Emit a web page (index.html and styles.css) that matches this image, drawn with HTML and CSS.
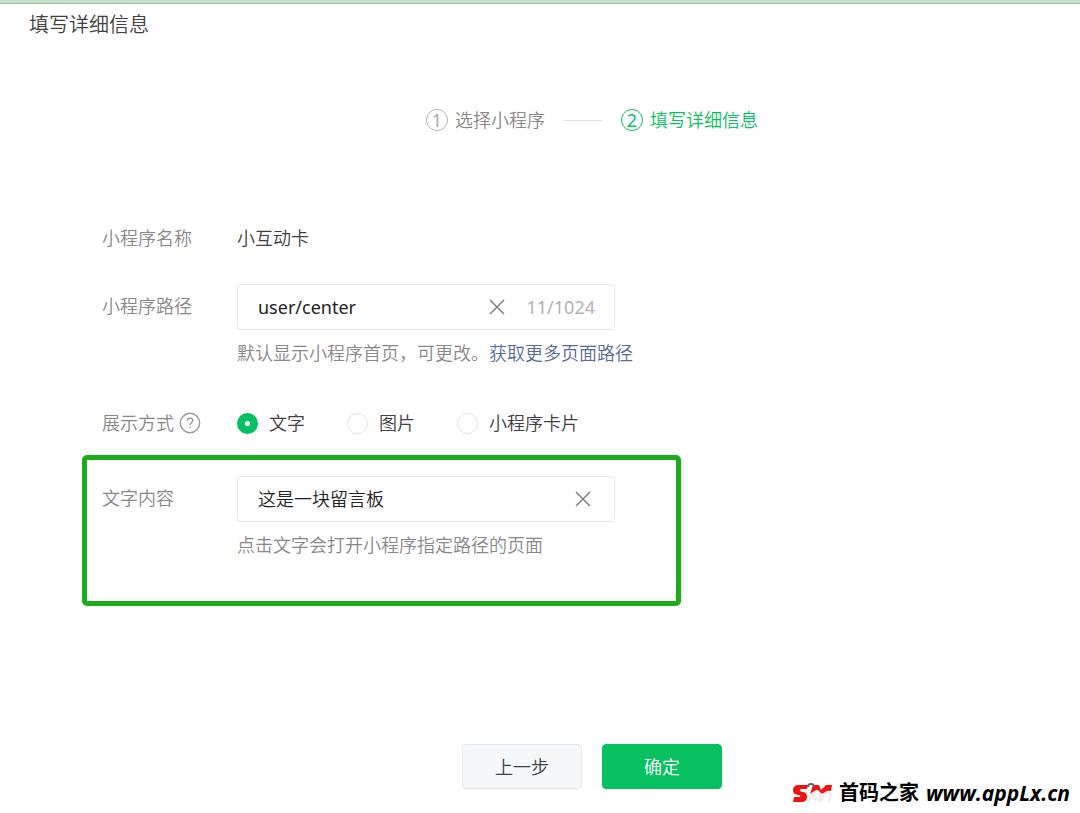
FILE: index.html
```html
<!DOCTYPE html>
<html lang="zh-CN">
<head>
    <meta charset="UTF-8">
    <meta name="viewport" content="width=device-width, initial-scale=1.0">
    <title>填写详细信息</title>
    <link rel="stylesheet" href="styles.css">
</head>
<body>
    <header class="page-header">
        <h1>填写详细信息</h1>
    </header>
    <main>
        <ol class="steps">
            <li class="step"><span class="step-number">1</span>选择小程序</li>
            <li class="step-line"></li>
            <li class="step active"><span class="step-number">2</span>填写详细信息</li>
        </ol>
        <form class="detail-form">
            <div class="form-row">
                <span class="form-label">小程序名称</span>
                <div class="form-field">小互动卡</div>
            </div>
            <div class="form-row path-row">
                <label class="form-label input-label" for="path">小程序路径</label>
                <div class="form-field">
                    <div class="input-box">
                        <input class="path-input" type="text" id="path" name="path" value="user/center">
                        <button type="button" class="clear" aria-label="清空">
                            <svg width="16" height="16" viewBox="0 0 16 16"><path d="M1 1l14 14M15 1L1 15"/></svg>
                        </button>
                        <span class="counter">11/1024</span>
                    </div>
                    <p class="hint">默认显示小程序首页，可更改。<a href="#">获取更多页面路径</a></p>
                </div>
            </div>
            <div class="form-row display-row" role="radiogroup" aria-labelledby="display-label">
                <div class="form-label help-label">
                    <span id="display-label">展示方式</span>
                    <svg class="help" width="22" height="22" viewBox="0 0 22 22">
                        <circle cx="11" cy="11" r="9.7"/>
                        <path d="M8.3 8.8c0-1.7 1.1-2.7 2.8-2.7s2.7 1 2.7 2.4c0 2-2.7 2.2-2.7 4.5"/>
                        <path d="M11.1 14.6v1.6"/>
                    </svg>
                </div>
                <div class="form-field radios">
                    <label><input type="radio" name="display" value="text" checked>文字</label>
                    <label><input type="radio" name="display" value="image">图片</label>
                    <label><input type="radio" name="display" value="card">小程序卡片</label>
                </div>
            </div>
            <div class="form-row highlight">
                <label class="form-label input-label" for="content">文字内容</label>
                <div class="form-field">
                    <div class="input-box">
                        <input type="text" id="content" name="content" value="这是一块留言板">
                        <button type="button" class="clear clear-last" aria-label="清空">
                            <svg width="16" height="16" viewBox="0 0 16 16"><path d="M1 1l14 14M15 1L1 15"/></svg>
                        </button>
                    </div>
                    <p class="hint">点击文字会打开小程序指定路径的页面</p>
                </div>
            </div>
            <div class="actions">
                <button type="button" class="btn">上一步</button>
                <button type="submit" class="btn btn-primary">确定</button>
            </div>
        </form>
    </main>
    <div class="watermark">
        <svg width="40" height="26" viewBox="0 0 40 26">
            <path class="logo-red" d="M16 5H7C3 5 1 7 1 10c0 4 2 4 5 5 2 0 3 1 2 2H2l-1 5h8c4 0 6-2 6-5 0-4-2-5-5-5-3-1-3-3 0-3h5z"/>
            <path class="logo-red" d="M18 14l3-9h6l2 5 5-5h6l-1 6c-4-1-6 1-9 3l-4-4c-3 0-5 2-8 4z"/>
            <path class="logo-shadow" d="M16 22l4-9 3 7 6-7-2 9M29 22l4-9h6l-2 9"/>
            <path class="logo-ring" d="M16 7a3 3 0 1 1 6 0"/>
        </svg>
        <span class="watermark-name">首码之家</span>
        <span class="watermark-url">www.appLx.cn</span>
    </div>
</body>
</html>
```

FILE: styles.css
```css
* {
    box-sizing: border-box;
}
body {
    margin: 0;
    position: relative;
    min-height: 100vh;
    background: #fff;
    color: #404040;
    font-family: "Noto Sans", "Noto Sans CJK SC", sans-serif;
    font-size: 18px;
    font-weight: 350;
    line-height: 24px;
}
input, button {
    font: inherit;
    color: inherit;
}
.page-header {
    padding: 8px 29px 0;
    border-top: 3px solid #c5e3c6;
    box-shadow: inset 0 1px 0 #a3b9a3;
}
h1 {
    margin: 0;
    font-size: 20px;
    font-weight: inherit;
    line-height: 28px;
}
.steps {
    display: flex;
    justify-content: center;
    align-items: center;
    gap: 19px;
    margin: 69px 0 0;
    padding: 0 0 0 104px;
    list-style: none;
    color: #888;
}
.step {
    display: flex;
    align-items: center;
    gap: 7px;
}
.step-number {
    width: 22px;
    height: 22px;
    border: 1px solid #b5b5b5;
    border-radius: 50%;
    color: #aaa;
    font-weight: 400;
    line-height: 20px;
    text-align: center;
}
.step-line {
    width: 38px;
    height: 1px;
    background: #e2e2e2;
}
.active, .active .step-number {
    color: #07c160;
    border-color: #07c160;
}
.detail-form {
    margin-top: 94px;
}
.form-row {
    display: flex;
    padding-left: 102px;
}
.form-label {
    flex: none;
    width: 135px;
    color: #888;
}
.input-label {
    line-height: 44px;
}
.path-row {
    margin-top: 34px;
}
.input-box {
    display: flex;
    align-items: center;
    width: 378px;
    height: 46px;
    padding: 0 19px 0 20px;
    border: 1px solid #e6e6e6;
    border-radius: 4px;
}
.input-box input {
    flex: 1;
    min-width: 0;
    padding: 0;
    border: 0;
    outline: none;
    background: none;
    color: #222;
}
.input-box .path-input {
    font-weight: 400;
}
.clear {
    display: flex;
    padding: 0;
    border: 0;
    background: none;
    cursor: pointer;
}
.clear svg {
    fill: none;
    stroke: #808080;
    stroke-width: 1.5;
}
.clear-last {
    margin-right: 4px;
}
.counter {
    margin-left: 22px;
    color: #b2b2b2;
    font-weight: 400;
}
.hint {
    margin: 11px 0 0;
    color: #888;
}
.hint a {
    color: #576b95;
    text-decoration: none;
}
.display-row {
    margin-top: 46px;
}
.help-label {
    display: flex;
    align-items: center;
    gap: 5px;
}
.help {
    fill: none;
    stroke: #999;
    stroke-width: 1.4;
}
.radios {
    display: flex;
    gap: 42px;
}
.radios label {
    display: flex;
    align-items: center;
    gap: 11px;
    cursor: pointer;
}
.radios input {
    appearance: none;
    width: 21px;
    height: 21px;
    margin: 0;
    border: 1px solid #e2e2e2;
    border-radius: 50%;
    background: #fff;
}
.radios input:checked {
    border: 8px solid #07c160;
}
.highlight {
    width: 599px;
    margin: 20px 0 0 82px;
    padding: 16px 0 44px 15px;
    border: 5px solid #1aad19;
    border-radius: 5px;
}
.actions {
    display: flex;
    justify-content: center;
    gap: 20px;
    margin-top: 138px;
    padding-left: 104px;
}
.btn {
    width: 120px;
    height: 45px;
    padding: 0;
    border: 1px solid #e4e6e9;
    border-radius: 4px;
    background: #f6f7f9;
    cursor: pointer;
}
.btn-primary {
    border-color: #07c160;
    background: #07c160;
    color: #fff;
}
/* site mark over the lower right corner */
.watermark {
    position: absolute;
    right: 10px;
    bottom: 7px;
    display: flex;
    align-items: center;
    color: #000;
    font-weight: 700;
}
.watermark-name {
    margin: 0 7px;
    font-size: 20px;
}
.watermark-url {
    font-family: "Open Sans", sans-serif;
    font-size: 21px;
    font-style: italic;
}
.logo-red {
    fill: #f31212;
}
.logo-ring {
    fill: none;
    stroke: #666;
    stroke-width: 2;
}
.logo-shadow {
    fill: none;
    stroke: #ddd;
}
```
